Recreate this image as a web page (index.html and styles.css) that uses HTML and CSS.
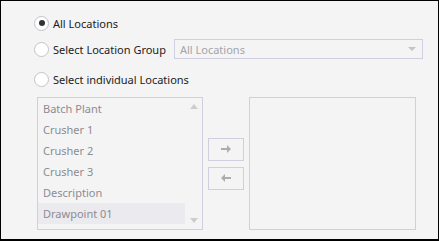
FILE: index.html
```html
<!DOCTYPE html>
<html>
<head>
    <title>Location Filter</title>
    <link rel="stylesheet" href="styles.css">
</head>
<body>
    <div class="frame">
        <div class="option option-first">
            <span class="radio checked"></span>
            <span class="label">All Locations</span>
        </div>
        <div class="option option-group">
            <span class="radio"></span>
            <span class="label">Select Location Group</span>
            <div class="dropdown">
                <span>All Locations</span>
                <span class="caret"></span>
            </div>
        </div>
        <div class="option option-single">
            <span class="radio"></span>
            <span class="label">Select individual Locations</span>
        </div>

        <div class="picker">
            <div class="listbox">
                <ul class="items">
                    <li>Batch Plant</li>
                    <li>Crusher 1</li>
                    <li>Crusher 2</li>
                    <li>Crusher 3</li>
                    <li>Description</li>
                    <li class="hover">Drawpoint 01</li>
                </ul>
                <div class="scrollbar">
                    <span class="tri up"></span>
                    <span class="tri down"></span>
                </div>
            </div>
            <div class="moves">
                <button class="move">
                    <svg width="12" height="10" viewBox="0 0 12 10">
                        <path d="M1 5H9" stroke="#adadad" stroke-width="2"/>
                        <path d="M7 1L11 5L7 9Z" fill="#adadad"/>
                    </svg>
                </button>
                <button class="move">
                    <svg width="12" height="10" viewBox="0 0 12 10">
                        <path d="M3 5H11" stroke="#adadad" stroke-width="2"/>
                        <path d="M5 1L1 5L5 9Z" fill="#adadad"/>
                    </svg>
                </button>
            </div>
            <div class="listbox selected"></div>
        </div>
    </div>
</body>
</html>
```

FILE: styles.css
```css
body {
    margin: 0;
    padding: 0;
    font-family: "Noto Sans", "Open Sans", sans-serif;
    font-size: 11px;
    color: #222;
}

.frame {
    box-sizing: border-box;
    width: 439px;
    height: 241px;
    border: 1px solid #000;
    border-bottom-width: 2px;
    background-color: #f4f4f4;
    padding: 14px 0 0 33px;
}

.option {
    display: flex;
    align-items: center;
}

.option-first {
    height: 16px;
}

.option-group {
    height: 20px;
    margin-top: 8px;
}

.option-single {
    height: 16px;
    margin-top: 12px;
}

.radio {
    box-sizing: border-box;
    width: 15px;
    height: 15px;
    border: 1px solid #c2c2ca;
    border-radius: 50%;
    background-color: #fff;
    display: flex;
    align-items: center;
    justify-content: center;
    flex-shrink: 0;
}

.radio.checked::after {
    content: "";
    width: 6px;
    height: 6px;
    border-radius: 50%;
    background-color: #333;
}

.label {
    margin-left: 4px;
}

.dropdown {
    box-sizing: border-box;
    width: 249px;
    height: 20px;
    margin-left: 8px;
    border: 1px solid #cfcfdf;
    background-color: #f4f4f4;
    color: #a4a4a8;
    padding: 0 5px;
    display: flex;
    align-items: center;
    justify-content: space-between;
}

.caret {
    width: 0;
    height: 0;
    border-left: 4px solid transparent;
    border-right: 4px solid transparent;
    border-top: 4px solid #c4c4c4;
    margin-right: 1px;
}

.picker {
    display: flex;
    align-items: center;
    margin-top: 10px;
    margin-left: 3px;
}

.listbox {
    box-sizing: border-box;
    width: 166px;
    height: 133px;
    border: 1px solid #cfcfdf;
    display: flex;
}

.listbox.selected {
    width: 167px;
}

.items {
    list-style: none;
    margin: 0;
    padding: 0;
    flex: 1;
}

.items li {
    height: 21px;
    line-height: 21px;
    padding-left: 5px;
    color: #8e8b92;
}

.items li.hover {
    background-color: #eaeaef;
}

.scrollbar {
    width: 17px;
    display: flex;
    flex-direction: column;
    justify-content: space-between;
    align-items: center;
    padding: 6px 0 6px;
}

.tri {
    width: 0;
    height: 0;
    border-left: 4px solid transparent;
    border-right: 4px solid transparent;
}

.tri.up {
    border-bottom: 5px solid #cdcdcd;
}

.tri.down {
    border-top: 5px solid #cdcdcd;
}

.moves {
    display: flex;
    flex-direction: column;
    gap: 6px;
    margin: 0 5px;
}

.move {
    box-sizing: border-box;
    width: 36px;
    height: 23px;
    border: 1px solid #cfcfdf;
    background-color: #f4f4f4;
    padding: 0;
    display: flex;
    align-items: center;
    justify-content: center;
}
```
